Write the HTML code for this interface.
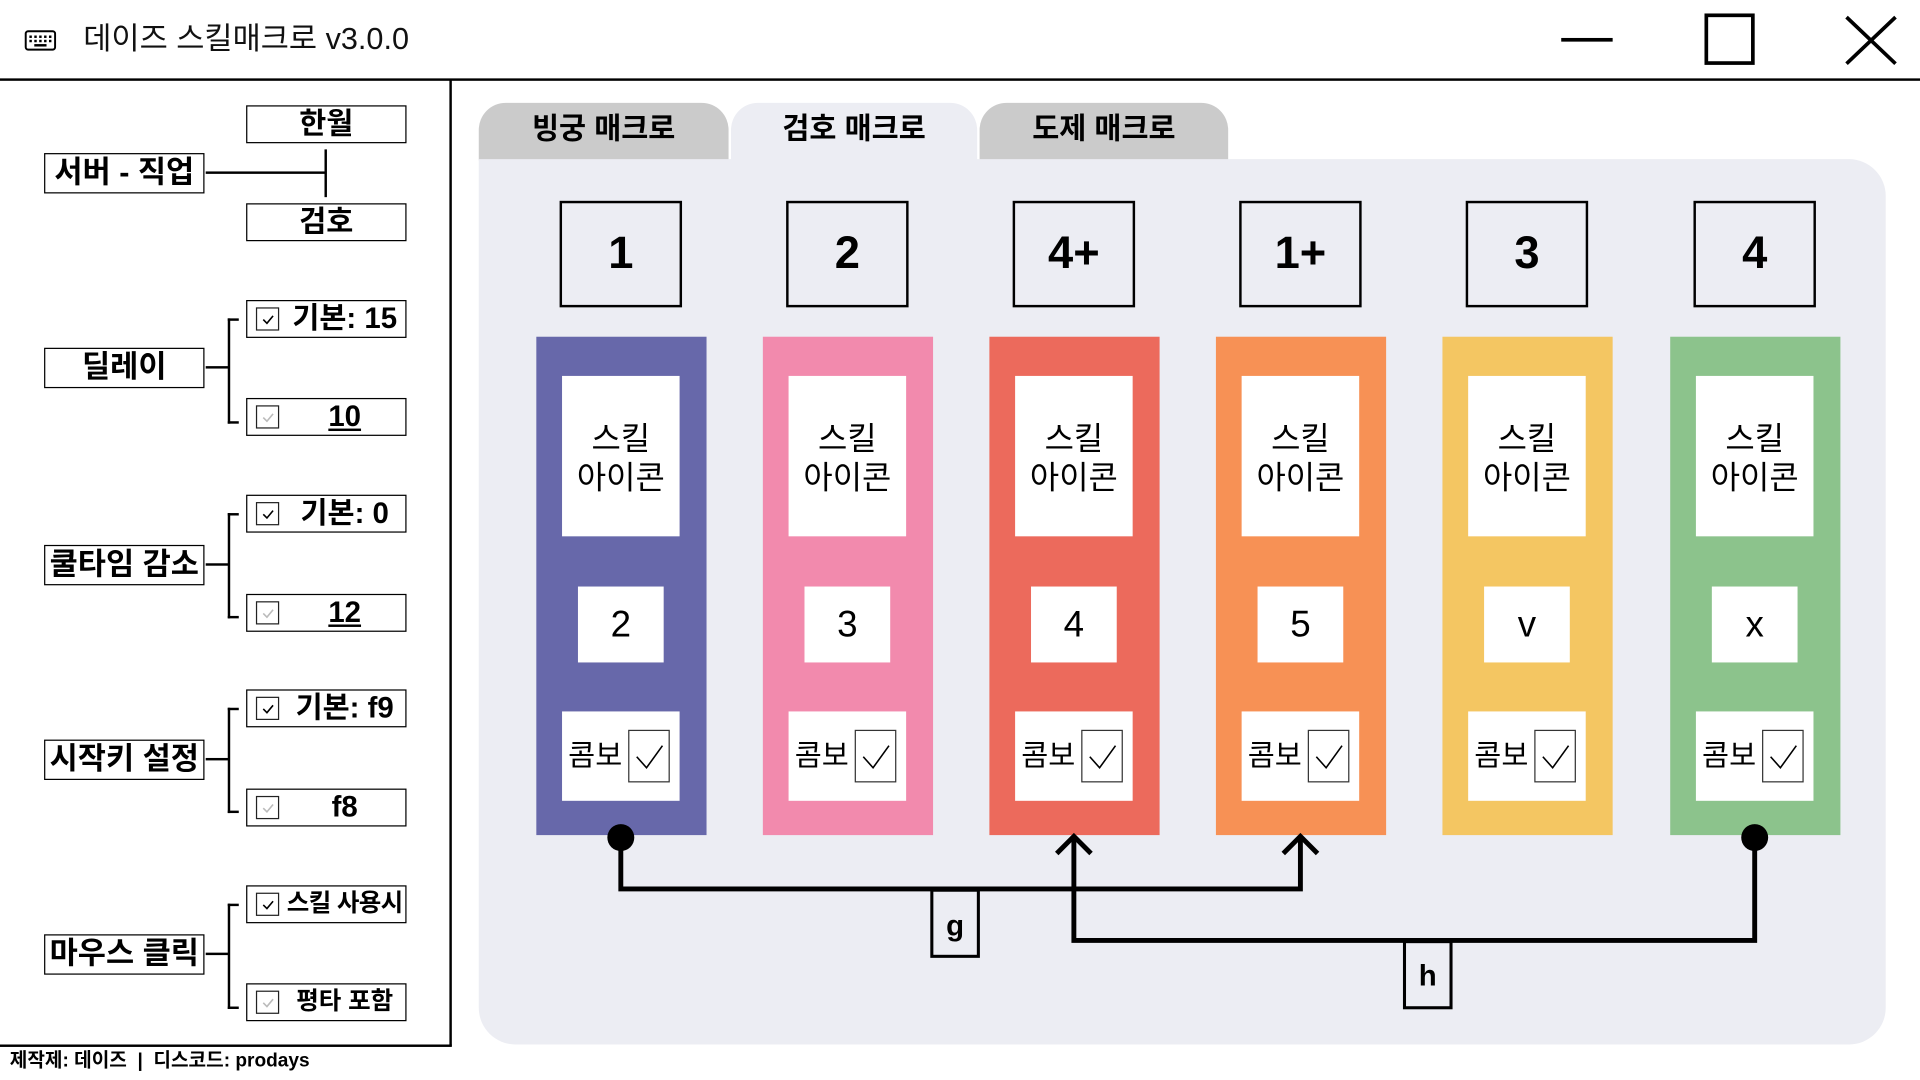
<!DOCTYPE html>
<html><head><meta charset="utf-8">
<style>
html,body{margin:0;padding:0;background:#fff;overflow:hidden;width:1920px;height:1080px}
#w{position:absolute;left:0;top:0;width:1568px;height:882px;transform:scale(1.22449);transform-origin:0 0;font-family:"Liberation Sans","Noto Sans CJK KR",sans-serif;color:#000}
.a{position:absolute;box-sizing:border-box}
.bx{position:absolute;box-sizing:border-box;border:1.5px solid #000;background:#fff;display:flex;align-items:center;justify-content:center;font-weight:bold;font-size:24px;line-height:1;white-space:nowrap}
.opt{position:absolute;box-sizing:border-box;border:1.5px solid #000;background:#fff;width:131px;height:31px;left:201px;font-weight:bold;font-size:24px;line-height:29px;white-space:nowrap}
.cb{position:absolute;left:7px;top:5px;width:19px;height:19px;border:1px solid #222;box-sizing:border-box}
.cb svg{position:absolute;left:2px;top:2px}
.opt .t{position:absolute;left:30px;right:0;top:0;text-align:center}
.brk{position:absolute;border:2px solid #000;border-right:none;width:7px;left:186px}
.hl{position:absolute;height:2px;background:#000;left:168px;width:19px}
.tab{position:absolute;top:84px;height:47px;width:204px;border-radius:22px 22px 0 0;background:#cbcbcb;font-weight:bold;font-size:24px;text-align:center;line-height:44px}
.key{position:absolute;top:164px;width:100px;height:87px;border:2.5px solid #000;box-sizing:border-box;font-weight:bold;font-size:37px;text-align:center;line-height:82px;font-family:"Liberation Sans",sans-serif}
.col{position:absolute;top:275px;width:139px;height:407px}
.ic{position:absolute;left:21px;top:32px;width:96px;height:131px;background:#fff;text-align:center;font-size:26px;line-height:32px;padding-top:35px;box-sizing:border-box}
.num{position:absolute;left:34px;top:204px;width:70px;height:62px;background:#fff;text-align:center;font-size:30px;line-height:64px;font-family:"Liberation Sans",sans-serif}
.cmb{position:absolute;left:21px;top:306px;width:96px;height:73px;background:#fff}
.cmb .c{position:absolute;left:5px;top:22px;font-size:24px;line-height:30px}
.cmb .k{position:absolute;left:54px;top:15px;width:34px;height:43px;border:1px solid #333;box-sizing:border-box}
</style></head><body><div id="w">
<svg class="a" style="left:20px;top:24px" width="26" height="18" viewBox="0 0 26 18"><rect x="1" y="1.5" width="24" height="15" rx="2" fill="none" stroke="#000" stroke-width="1.6"/><g fill="#000"><rect x="4" y="5" width="2" height="2"/><rect x="8" y="5" width="2" height="2"/><rect x="12" y="5" width="2" height="2"/><rect x="16" y="5" width="2" height="2"/><rect x="20" y="5" width="2" height="2"/><rect x="4" y="8.5" width="2" height="2"/><rect x="8" y="8.5" width="2" height="2"/><rect x="12" y="8.5" width="2" height="2"/><rect x="16" y="8.5" width="2" height="2"/><rect x="20" y="8.5" width="2" height="2"/><rect x="8" y="12" width="10" height="2"/></g></svg>
<div class="a" style="left:68px;top:16px;font-size:25px;line-height:32px;color:#111">데이즈 스킬매크로 v3.0.0</div>
<div class="a" style="left:1275px;top:31px;width:42px;height:3px;background:#000"></div>
<div class="a" style="left:1392px;top:11px;width:41px;height:42px;border:3px solid #000"></div>
<svg class="a" style="left:1505px;top:11px" width="46" height="44"><path d="M3 3L43 41M43 3L3 41" stroke="#000" stroke-width="3"/></svg>
<div class="a" style="left:0;top:64px;width:1568px;height:1.5px;background:#000"></div>
<div class="a" style="left:367px;top:65px;width:1.5px;height:789px;background:#000"></div>
<div class="a" style="left:0;top:853px;width:369px;height:1.5px;background:#000"></div>
<div class="bx" style="left:36px;top:125px;width:131px;height:33px;font-size:25px">서버 - 직업</div>
<div class="bx" style="left:201px;top:86px;width:131px;height:31px">한월</div>
<div class="bx" style="left:201px;top:166px;width:131px;height:31px">검호</div>
<div class="a" style="left:168px;top:140px;width:98px;height:2px;background:#000"></div>
<div class="a" style="left:265px;top:122px;width:2px;height:39px;background:#000"></div>

<div class="bx" style="left:36px;top:284px;width:131px;height:33px;font-size:25px">딜레이</div>
<div class="hl" style="top:299px"></div><div class="brk" style="top:260px;height:82px"></div>
<div class="opt" style="top:245px"><div class="cb"><svg width="14" height="14"><path d="M3 7l3 3 5-6" fill="none" stroke="#000" stroke-width="1.3"/></svg></div><div class="t">기본: 15</div></div>
<div class="opt" style="top:325px"><div class="cb"><svg width="14" height="14"><path d="M3 7l3 3 5-6" fill="none" stroke="#bbb" stroke-width="1.3"/></svg></div><div class="t"><u>10</u></div></div>

<div class="bx" style="left:36px;top:445px;width:131px;height:33px;font-size:25px">쿨타임 감소</div>
<div class="hl" style="top:460px"></div><div class="brk" style="top:419px;height:82px"></div>
<div class="opt" style="top:404px"><div class="cb"><svg width="14" height="14"><path d="M3 7l3 3 5-6" fill="none" stroke="#000" stroke-width="1.3"/></svg></div><div class="t">기본: 0</div></div>
<div class="opt" style="top:485px"><div class="cb"><svg width="14" height="14"><path d="M3 7l3 3 5-6" fill="none" stroke="#bbb" stroke-width="1.3"/></svg></div><div class="t"><u>12</u></div></div>

<div class="bx" style="left:36px;top:604px;width:131px;height:33px;font-size:25px">시작키 설정</div>
<div class="hl" style="top:619px"></div><div class="brk" style="top:578px;height:82px"></div>
<div class="opt" style="top:563px"><div class="cb"><svg width="14" height="14"><path d="M3 7l3 3 5-6" fill="none" stroke="#000" stroke-width="1.3"/></svg></div><div class="t">기본: f9</div></div>
<div class="opt" style="top:644px"><div class="cb"><svg width="14" height="14"><path d="M3 7l3 3 5-6" fill="none" stroke="#bbb" stroke-width="1.3"/></svg></div><div class="t">f8</div></div>

<div class="bx" style="left:36px;top:763px;width:131px;height:33px;font-size:25px">마우스 클릭</div>
<div class="hl" style="top:778px"></div><div class="brk" style="top:738px;height:82px"></div>
<div class="opt" style="top:723px;font-size:20px"><div class="cb"><svg width="14" height="14"><path d="M3 7l3 3 5-6" fill="none" stroke="#000" stroke-width="1.3"/></svg></div><div class="t" style="letter-spacing:-0.5px">스킬 사용시</div></div>
<div class="opt" style="top:803px;font-size:20px"><div class="cb"><svg width="14" height="14"><path d="M3 7l3 3 5-6" fill="none" stroke="#bbb" stroke-width="1.3"/></svg></div><div class="t">평타 포함</div></div>

<div class="a" style="left:8px;top:857px;font-size:15.6px;font-weight:bold;line-height:20px;white-space:nowrap">제작제: 데이즈 &nbsp;|&nbsp; 디스코드: prodays</div>

<div class="tab" style="left:391px">빙궁 매크로</div>
<div class="tab" style="left:597px;width:201px;background:#ecedf3">검호 매크로</div>
<div class="tab" style="left:800px;width:203px">도제 매크로</div>
<div class="a" style="left:391px;top:130px;width:1149px;height:723px;background:#ecedf3;border-radius:0 30px 30px 30px"></div>

<div class="key" style="left:457px">1</div>
<div class="key" style="left:642px">2</div>
<div class="key" style="left:827px">4+</div>
<div class="key" style="left:1012px">1+</div>
<div class="key" style="left:1197px">3</div>
<div class="key" style="left:1383px">4</div>

<div class="col" style="left:438px;background:#6768aa"><div class="ic">스킬<br>아이콘</div><div class="num">2</div><div class="cmb"><div class="c">콤보</div><div class="k"><svg width="32" height="41"><path d="M6 21l8 9 13-18" fill="none" stroke="#000" stroke-width="1.3"/></svg></div></div></div>
<div class="col" style="left:623px;background:#f28aad"><div class="ic">스킬<br>아이콘</div><div class="num">3</div><div class="cmb"><div class="c">콤보</div><div class="k"><svg width="32" height="41"><path d="M6 21l8 9 13-18" fill="none" stroke="#000" stroke-width="1.3"/></svg></div></div></div>
<div class="col" style="left:808px;background:#ec6a5c"><div class="ic">스킬<br>아이콘</div><div class="num">4</div><div class="cmb"><div class="c">콤보</div><div class="k"><svg width="32" height="41"><path d="M6 21l8 9 13-18" fill="none" stroke="#000" stroke-width="1.3"/></svg></div></div></div>
<div class="col" style="left:993px;background:#f79155"><div class="ic">스킬<br>아이콘</div><div class="num">5</div><div class="cmb"><div class="c">콤보</div><div class="k"><svg width="32" height="41"><path d="M6 21l8 9 13-18" fill="none" stroke="#000" stroke-width="1.3"/></svg></div></div></div>
<div class="col" style="left:1178px;background:#f4c662"><div class="ic">스킬<br>아이콘</div><div class="num">v</div><div class="cmb"><div class="c">콤보</div><div class="k"><svg width="32" height="41"><path d="M6 21l8 9 13-18" fill="none" stroke="#000" stroke-width="1.3"/></svg></div></div></div>
<div class="col" style="left:1364px;background:#8cc38c"><div class="ic">스킬<br>아이콘</div><div class="num">x</div><div class="cmb"><div class="c">콤보</div><div class="k"><svg width="32" height="41"><path d="M6 21l8 9 13-18" fill="none" stroke="#000" stroke-width="1.3"/></svg></div></div></div>

<svg class="a" style="left:0;top:0" width="1568" height="882">
<g fill="none" stroke="#000" stroke-width="4">
<path d="M507 684V726H1062V684"/>
<path d="M1048 697L1062 683L1076 697"/>
<path d="M1433 684V768H877V684"/>
<path d="M863 697L877 683L891 697"/>
</g>
<circle cx="507" cy="684" r="11" fill="#000"/>
<circle cx="1433" cy="684" r="11" fill="#000"/>
<rect x="761" y="727" width="38" height="54" fill="#ecedf3" stroke="#000" stroke-width="2.5"/>
<rect x="1147" y="769" width="38" height="54" fill="#ecedf3" stroke="#000" stroke-width="2.5"/>
<text x="780" y="764" font-family="Liberation Sans" font-weight="bold" font-size="24" text-anchor="middle">g</text>
<text x="1166" y="805" font-family="Liberation Sans" font-weight="bold" font-size="24" text-anchor="middle">h</text>
</svg>
</div></body></html>
